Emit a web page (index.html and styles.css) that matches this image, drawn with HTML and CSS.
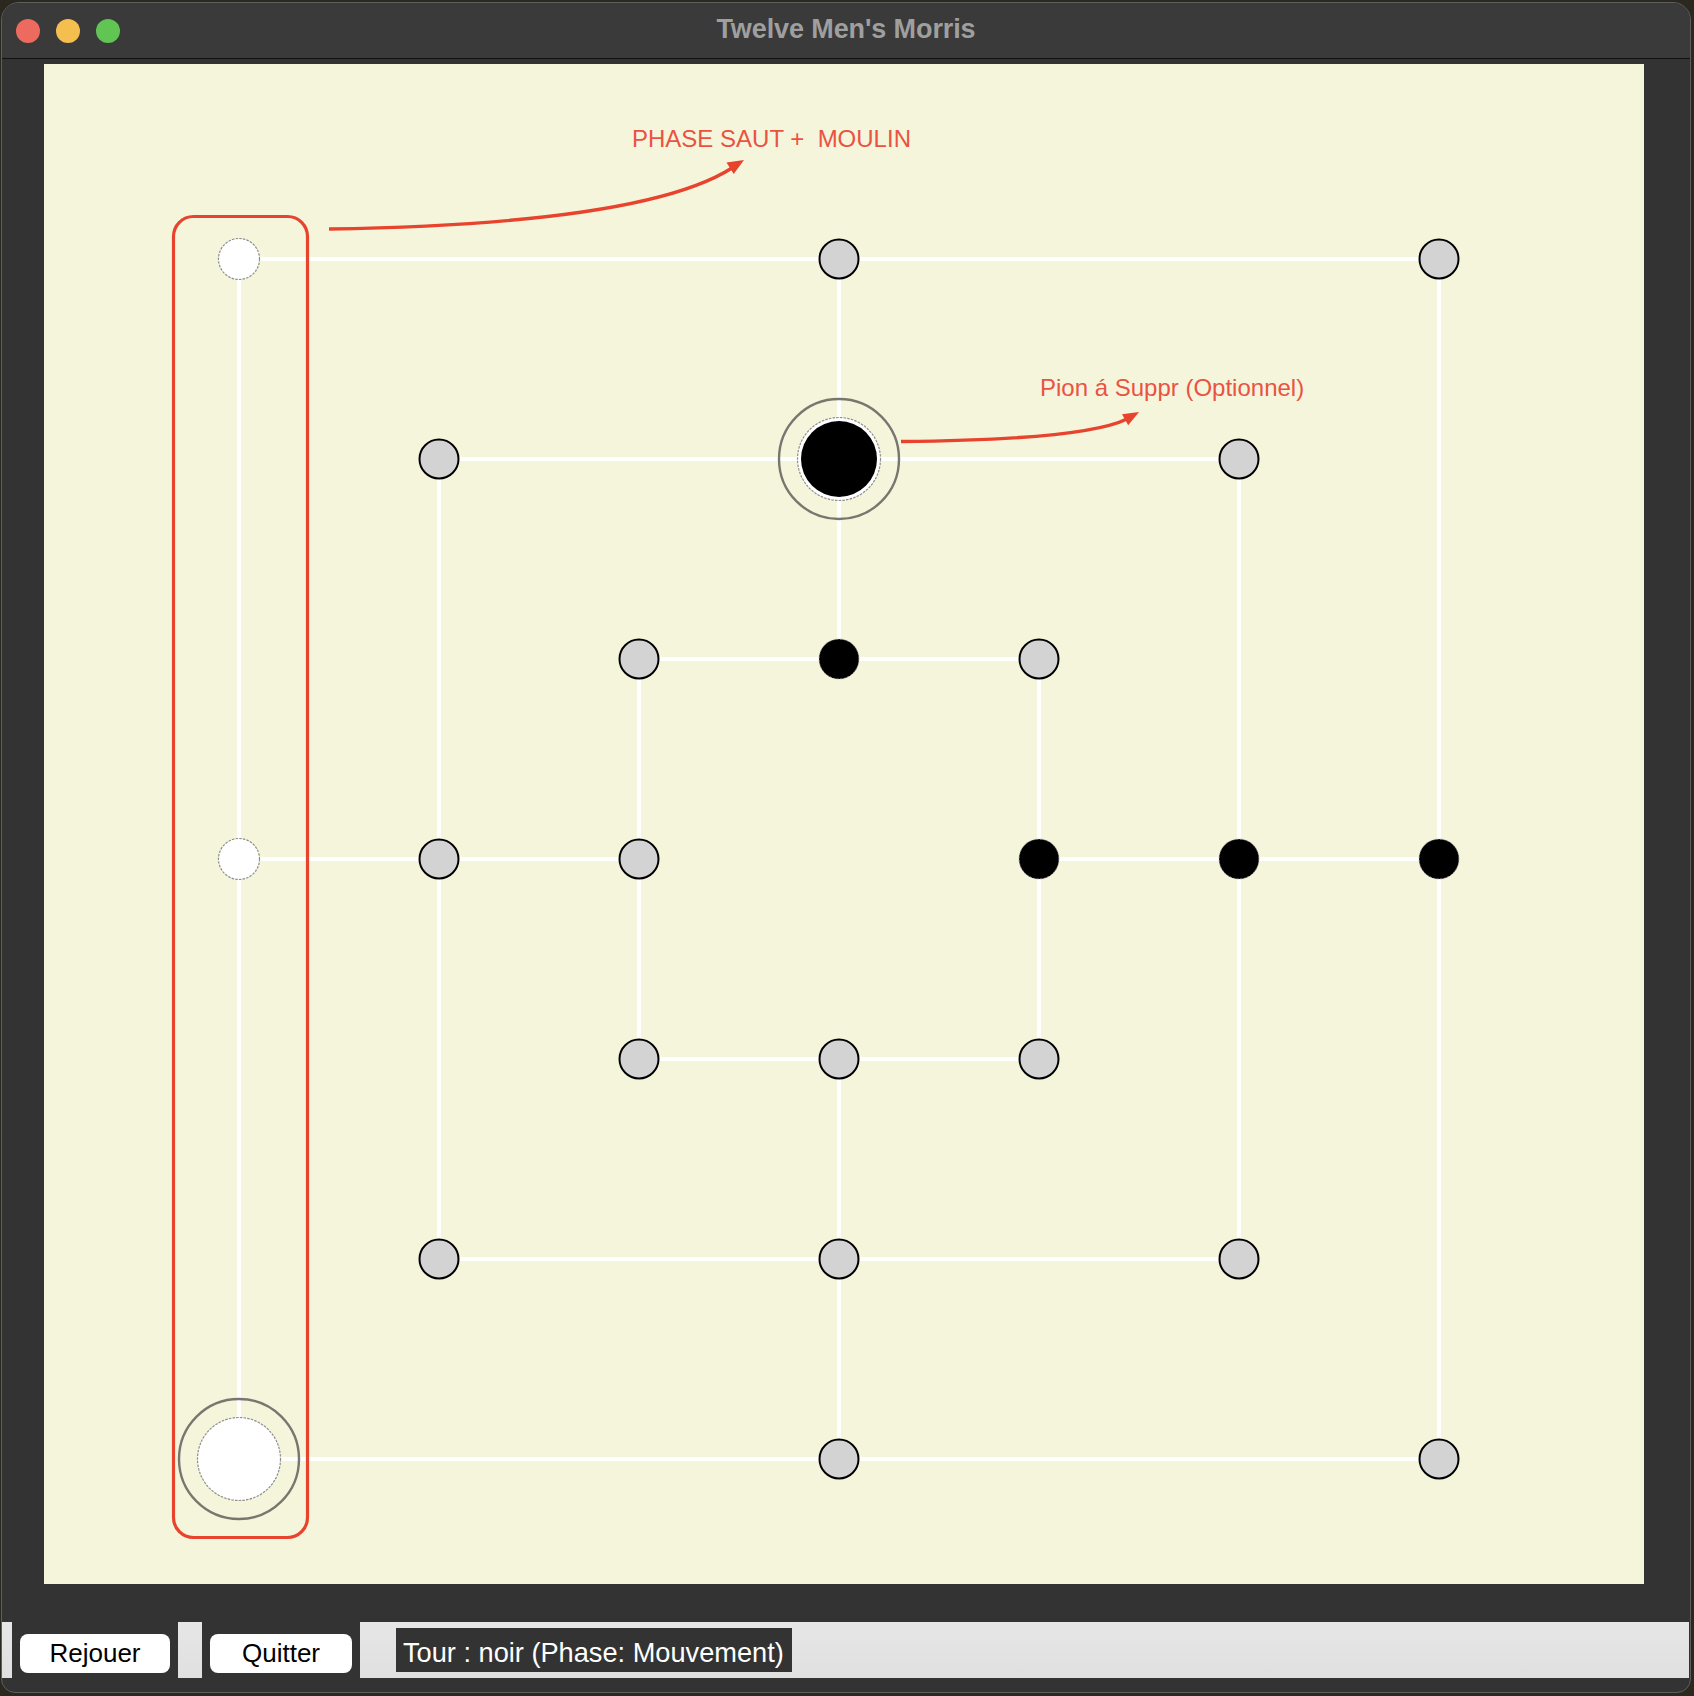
FILE: index.html
```html
<!DOCTYPE html>
<html lang="fr">
<head>
<meta charset="utf-8">
<title>Twelve Men's Morris</title>
<link rel="stylesheet" href="styles.css">
</head>
<body>
<div class="window">
  <header class="titlebar">
    <div class="lights">
      <span class="light red"></span>
      <span class="light yellow"></span>
      <span class="light green"></span>
    </div>
    <div class="title">Twelve Men's Morris</div>
    <div></div>
  </header>
  <main class="body">
    <div class="board">
      <svg class="board-svg" width="1600" height="1520" viewBox="0 0 1600 1520">
        <g class="lines">
          <path d="M195,195 H1395 V1395 H195 Z"/>
          <path d="M395,395 H1195 V1195 H395 Z"/>
          <path d="M595,595 H995 V995 H595 Z"/>
          <path d="M795,195 V595 M795,995 V1395 M195,795 H595 M995,795 H1395"/>
        </g>
        <!-- empty points -->
        <g class="empty">
          <circle cx="795" cy="195" r="19.5"/>
          <circle cx="1395" cy="195" r="19.5"/>
          <circle cx="395" cy="395" r="19.5"/>
          <circle cx="1195" cy="395" r="19.5"/>
          <circle cx="595" cy="595" r="19.5"/>
          <circle cx="995" cy="595" r="19.5"/>
          <circle cx="395" cy="795" r="19.5"/>
          <circle cx="595" cy="795" r="19.5"/>
          <circle cx="595" cy="995" r="19.5"/>
          <circle cx="795" cy="995" r="19.5"/>
          <circle cx="995" cy="995" r="19.5"/>
          <circle cx="395" cy="1195" r="19.5"/>
          <circle cx="795" cy="1195" r="19.5"/>
          <circle cx="1195" cy="1195" r="19.5"/>
          <circle cx="795" cy="1395" r="19.5"/>
          <circle cx="1395" cy="1395" r="19.5"/>
        </g>
        <!-- white pieces -->
        <g class="white-piece">
          <circle cx="195" cy="195" r="20.5"/>
          <circle cx="195" cy="795" r="20.5"/>
          <circle cx="195" cy="1395" r="41.5"/>
        </g>
        <!-- black pieces -->
        <g class="black-piece">
          <circle cx="795" cy="595" r="20"/>
          <circle cx="995" cy="795" r="20"/>
          <circle cx="1195" cy="795" r="20"/>
          <circle cx="1395" cy="795" r="20"/>
        </g>
        <circle class="white-piece-ring" cx="795" cy="395" r="41.5"/>
        <circle class="black-big" cx="795" cy="395" r="38"/>
        <!-- selection rings -->
        <g class="sel-ring">
          <circle cx="795" cy="395" r="60"/>
          <circle cx="195" cy="1395" r="60"/>
        </g>
        <!-- annotations -->
        <g class="annot">
          <rect class="annot-box" x="129.5" y="152.5" width="134" height="1321" rx="20" ry="20"/>
          <path class="annot-line" d="M285,165 Q600,160 688,104"/>
          <polygon class="annot-head" points="700,96 689.7,110 682.5,98.6"/>
          <path class="annot-line" d="M857,377.5 Q1040,376 1083,355"/>
          <polygon class="annot-head" points="1095,348 1084.2,361.3 1078,350.2"/>
          <text class="annot-text" x="588" y="83">PHASE SAUT +  MOULIN</text>
          <text class="annot-text" x="996" y="332">Pion á Suppr (Optionnel)</text>
        </g>
      </svg>
    </div>
    <footer class="controls">
      <div class="btn-cell btn-cell-wide"><button class="btn">Rejouer</button></div>
      <div class="btn-cell btn-cell-narrow"><button class="btn">Quitter</button></div>
      <div class="status">Tour : noir (Phase: Mouvement)</div>
    </footer>
  </main>
</div>
</body>
</html>
```
FILE: styles.css
```css
* { box-sizing: border-box; }

html, body {
  margin: 0;
  padding: 0;
}

body {
  width: 1694px;
  height: 1696px;
  background: #2a281f;
  font-family: "Liberation Sans", Arial, sans-serif;
  overflow: hidden;
}

.window {
  margin: 2px 0 0 1px;
  width: 1690px;
  height: 1691px;
  border: 1px solid #5e5e5e;
  border-radius: 18px 18px 14px 14px;
  background: #333333;
  overflow: hidden;
  display: flex;
  flex-direction: column;
}

.titlebar {
  height: 56px;
  flex: none;
  background: #3a3a3a;
  border-bottom: 1px solid #111;
  display: grid;
  grid-template-columns: 1fr auto 1fr;
  align-items: center;
}

.lights {
  display: flex;
  gap: 16px;
  padding-left: 14px;
  align-items: center;
}

.light {
  width: 24px;
  height: 24px;
  border-radius: 50%;
  display: block;
}
.red { background: #ed6a5e; }
.yellow { background: #f5bf4f; }
.green { background: #61c554; }

.title {
  font-weight: bold;
  font-size: 27px;
  color: #9f9f9f;
  padding-bottom: 2px;
  letter-spacing: -0.1px;
}

.body {
  flex: 1;
  display: flex;
  flex-direction: column;
}

.board {
  margin: 5px 0 0 42px;
  width: 1600px;
  height: 1520px;
  background: #f5f5dc;
}

.board-svg { display: block; }

.lines path {
  fill: none;
  stroke: #ffffff;
  stroke-width: 4;
}

.empty circle {
  fill: #d3d3d3;
  stroke: #000;
  stroke-width: 2;
}

.white-piece circle,
.white-piece-ring {
  fill: #ffffff;
  stroke: #8e8e8e;
  stroke-width: 1.2;
  stroke-dasharray: 2.5 1.2;
}

.black-piece circle {
  fill: #000;
  stroke: #b0b0b0;
  stroke-width: 0.8;
  stroke-dasharray: 2 1.5;
}

.black-big { fill: #000; }

.sel-ring circle {
  fill: none;
  stroke: #77776f;
  stroke-width: 2.4;
}

.annot-box {
  fill: none;
  stroke: #e8432c;
  stroke-width: 3.2;
}

.annot-line {
  fill: none;
  stroke: #e8432c;
  stroke-width: 3.4;
}

.annot-head { fill: #e8432c; }

.annot-text {
  fill: #ea5242;
  font-family: "Liberation Sans", Arial, sans-serif;
  font-size: 24px;
  white-space: pre;
}

.controls {
  margin-top: 38px;
  margin-right: 1px;
  height: 56px;
  background: linear-gradient(#e6e6e6, #e0e0e0);
  display: flex;
  align-items: stretch;
  padding-left: 10px;
}

.btn-cell {
  background: #333333;
  padding: 12px 8px 5px 8px;
  display: flex;
}

.btn-cell-wide { width: 166px; }
.btn-cell-narrow { width: 158px; margin-left: 24px; }

.btn {
  flex: 1;
  border: none;
  border-radius: 8px;
  background: #ffffff;
  font-family: "Liberation Sans", Arial, sans-serif;
  font-size: 26px;
  color: #000;
  padding: 0 0 1px 0;
  margin: 0;
}

.status {
  margin-left: 36px;
  align-self: center;
  height: 44px;
  background: #333333;
  color: #ffffff;
  font-size: 27.2px;
  line-height: 44px;
  padding: 3px 8px 0 7px;
  white-space: nowrap;
}
```
